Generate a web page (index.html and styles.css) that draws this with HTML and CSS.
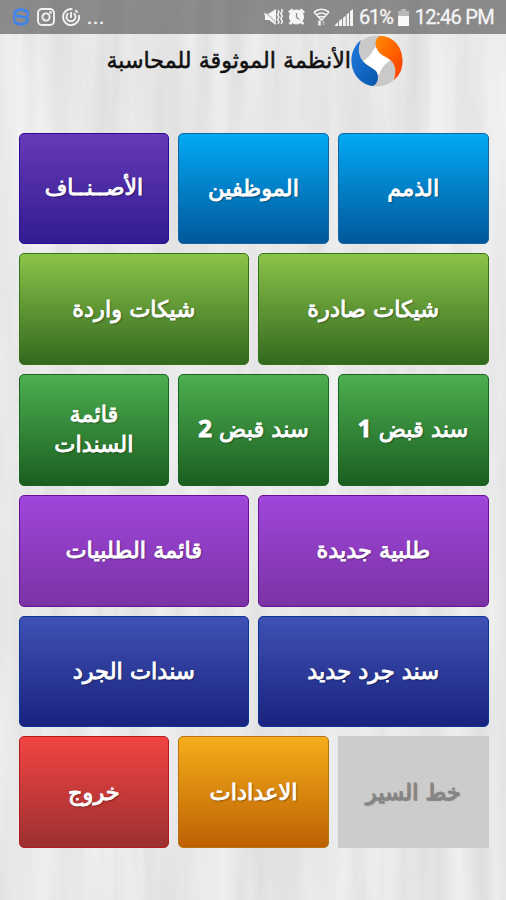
FILE: index.html
```
<!DOCTYPE html>
<html lang="ar" dir="rtl">
<head>
<meta charset="utf-8">
<title>الأنظمة الموثوقة للمحاسبة</title>
<link rel="stylesheet" href="styles.css">
</head>
<body>
<svg class="wood" width="506" height="900" aria-hidden="true">
  <filter id="grain" x="0" y="0" width="100%" height="100%" color-interpolation-filters="sRGB">
    <feTurbulence type="fractalNoise" baseFrequency="0.04 0.003" numOctaves="3" seed="8"/>
    <feColorMatrix values="0.11 0 0 0 0.855  0.11 0 0 0 0.855  0.11 0 0 0 0.855  0 0 0 0 1"/>
  </filter>
  <rect width="506" height="900" filter="url(#grain)"/>
</svg>
<header class="status" dir="ltr">
  <div class="notices">
    <svg width="18" height="18" viewBox="0 0 18 18" fill="none" stroke="#3f83ee" stroke-width="2.7"><path d="M16 5.500C14 .8 5.500 .5 3 4.300 1.500 7 3.500 8.200 9 8.500s8 2.500 5.800 5.500C12 17.500 4.500 17 2 12.500"/><path d="M2 8.500v3.500M16 5v4" stroke-width="2"/></svg>
    <svg width="18" height="18" viewBox="0 0 18 18" fill="none" stroke="#f2f2f2" stroke-width="1.900"><rect x="1" y="1" width="16" height="16" rx="4"/><circle cx="9" cy="9" r="3.600"/><circle cx="13.500" cy="4.500" r=".5"/></svg>
    <svg width="18" height="18" viewBox="0 0 18 18" fill="none" stroke="#f2f2f2" stroke-width="1.900"><path d="M10.500 1.200A8 8 0 1 0 16.800 7M13.200 2.200a8 8 0 0 1 2.500 2.500M6.300 5.200a4.500 4.500 0 1 0 5.400 0M9 4v6"/></svg>
    <span class="more">...</span>
  </div>
  <div class="system">
    <svg class="mute" width="19" height="18" viewBox="0 0 19 18" fill="#f5f5f5"><path d="M0 5l4 1 8-5v16l-7-5H1V8z"/><path d="M0 2.500l12 12" stroke="#999" stroke-width="1"/><path d="M14 2l1 2-1.500 2.500 1.500 2.500-1.500 2.500L15 14l-1 2M17.500 1l.8 2-1.500 2.500 1.500 2.500-1.500 2.500 1.500 2.500-1 3" fill="none" stroke="#f5f5f5" stroke-width="1.500"/></svg>
    <svg class="alarm" width="17" height="18" viewBox="0 0 17 18" fill="none" stroke="#f5f5f5"><circle cx="8.500" cy="9" r="7" fill="#f5f5f5"/><path d="M.8 4.500l4-3M12.200 1.500l4 3M1.500 16l3-2.500M15.500 16l-3-2.500" stroke-width="2.500"/><path d="M8.500 5V9.500l3 2" stroke="#909090" stroke-width="1.300"/></svg>
    <svg class="wifi" width="17" height="18" viewBox="0 0 17 18" fill="none" stroke="#f5f5f5" stroke-width="1.600"><path d="M1 4Q8.500-1.500 16 4M3.500 7Q8.500 3 13.500 7M6 9.500Q8.500 7.500 11 9.500M1 4l7.500 8L16 4"/><path d="M6.500 12.500v5" stroke-width="2.500"/><path d="M10.500 12.500v4.500" stroke="#b5b5b5" stroke-width="2"/></svg>
    <svg class="signal" width="18" height="17" viewBox="0 0 18 17" fill="#f5f5f5"><path d="M0 17v-1l3-3v4zM4 17v-5l3-2.500V17zM8 17V9l2.700-2.500V17zM11.700 17V5.500L14 3.500V17zM15 17V2.500l3-2.500v17z"/></svg>
    <span class="percent">61%</span>
    <svg class="battery" width="11" height="17" viewBox="0 0 11 17"><path d="M3 0h5v2h3v6H0V2h3z" fill="#b8b8b8"/><path d="M0 7h11v10H0z" fill="#f8f8f8"/></svg>
    <span class="time">12:46 PM</span>
  </div>
</header>
<div class="brand">
  <svg class="logo" width="52" height="52" viewBox="0 0 52 52">
    <defs>
      <linearGradient id="or" x1="0" y1="0" x2="1" y2="1"><stop offset="0" stop-color="#ff8a00"/><stop offset="1" stop-color="#ff3a00"/></linearGradient>
      <linearGradient id="bl" x1="0" y1="0" x2="1" y2="1"><stop offset="0" stop-color="#1f7bdc"/><stop offset="1" stop-color="#0756ad"/></linearGradient>
    </defs>
    <circle cx="26" cy="26" r="25.500" fill="#c9c9c9"/>
    <path d="M12 26C16 24 20 20 24 12L42 24C36 27 31 31 28 40z" fill="#fff"/>
    <path d="M29 1C42 1 51 11 51.500 25C52 34 48 41 43 45C46 35 44 28 38 24C32 20 29 20 26 14C23 7 25 3 29 1z" fill="url(#or)"/>
    <path d="M10 5C3 11 0 19 .5 27C1 40 11 50 22 51C28 48 28 40 25 36C21 32 15 31 11 25C7 19 7 12 10 5z" fill="url(#bl)"/>
  </svg>
  <h1 class="title"><span>الأنظمة الموثوقة للمحاسبة</span></h1>
</div>
<main class="menu">
  <button class="tile third sky"><span>الذمم</span></button>
  <button class="tile third sky"><span>الموظفين</span></button>
  <button class="tile third indigo"><span>الأصــنــاف</span></button>
  <button class="tile half lime"><span>شيكات صادرة</span></button>
  <button class="tile half lime"><span>شيكات واردة</span></button>
  <button class="tile third green"><span>سند قبض <b>1</b></span></button>
  <button class="tile third green"><span>سند قبض <b>2</b></span></button>
  <button class="tile third green"><span>قائمة<br>السندات</span></button>
  <button class="tile half purple"><span>طلبية جديدة</span></button>
  <button class="tile half purple"><span>قائمة الطلبيات</span></button>
  <button class="tile half navy"><span>سند جرد جديد</span></button>
  <button class="tile half navy"><span>سندات الجرد</span></button>
  <button class="tile third off" disabled><span>خط السير</span></button>
  <button class="tile third amber"><span>الاعدادات</span></button>
  <button class="tile third red"><span>خروج</span></button>
</main>
</body>
</html>
```
FILE: styles.css
```
* { box-sizing: border-box; }
body { margin: 0; width: 506px; height: 900px; overflow: hidden; background: #e8e8e8; font-family: "DejaVu Sans", sans-serif; }
.wood { position: absolute; top: 0; left: 0; z-index: -1; }
.status { height: 34px; padding: 0 12px; background: rgba(75, 75, 75, .6); display: flex; align-items: center; justify-content: space-between; color: #f5f5f5; font-family: Roboto, sans-serif; font-size: 20px; }
.notices, .system { display: flex; align-items: center; }
.notices { gap: 7px; }
.more { letter-spacing: .7px; -webkit-text-stroke: .4px; }
.alarm { margin-left: 5px; }
.wifi { margin-left: 8px; }
.signal { margin-left: 5px; }
.percent { margin-left: 6px; letter-spacing: -1.100px; -webkit-text-stroke: .3px; }
.battery { margin-left: 5px; }
.time { margin-left: 6px; letter-spacing: -.7px; -webkit-text-stroke: .3px; }
.brand { height: 98.500px; padding: 1px 103px 0 0; display: flex; align-items: flex-start; }
.logo { flex: none; }
.title { margin: 11px 0 0; font-size: 22.200px; line-height: 28px; font-weight: 400; color: #111; white-space: nowrap; -webkit-text-stroke: .5px; }
.menu { width: 470px; margin-right: 17.500px; display: flex; flex-wrap: wrap; gap: 9px; }
.tile { height: 111.800px; padding: 0 0 1px; border: 1px solid; border-radius: 5px; color: #fff; font: 22.500px/30px "DejaVu Sans", sans-serif; -webkit-text-stroke: .9px; text-shadow: 1px 1px 2px rgba(0, 0, 0, .5); white-space: nowrap; }
.tile b { font-family: "Open Sans", sans-serif; font-size: 24px; line-height: 24px; }
.third { width: 150.660px; }
.half { width: 230.500px; }
.sky { background: linear-gradient(#03a9f4, #01579b); border-color: #1565a5; }
.indigo { background: linear-gradient(#673ab7, #311b92); border-color: #2a0c96; font-size: 21.800px; }
.lime { background: linear-gradient(#8bc34a, #33691e); border-color: #337516; }
.green { background: linear-gradient(#4caf50, #1b5e20); border-color: #17651e; }
.purple { background: linear-gradient(#a046dc, #7a33a5); border-color: #6a0f9c; }
.navy { background: linear-gradient(#3f51b5, #1a237e); border-color: #0c3598; }
.amber { background: linear-gradient(#f4ae1a, #bd6003); border-color: #b87314; }
.red { background: linear-gradient(#f14442, #9c3030); border-color: #b51a1f; }
.off { background: #ccc; border-color: #ccc; border-radius: 0; color: #858585; text-shadow: 1px 1px 1px #888; }
```
